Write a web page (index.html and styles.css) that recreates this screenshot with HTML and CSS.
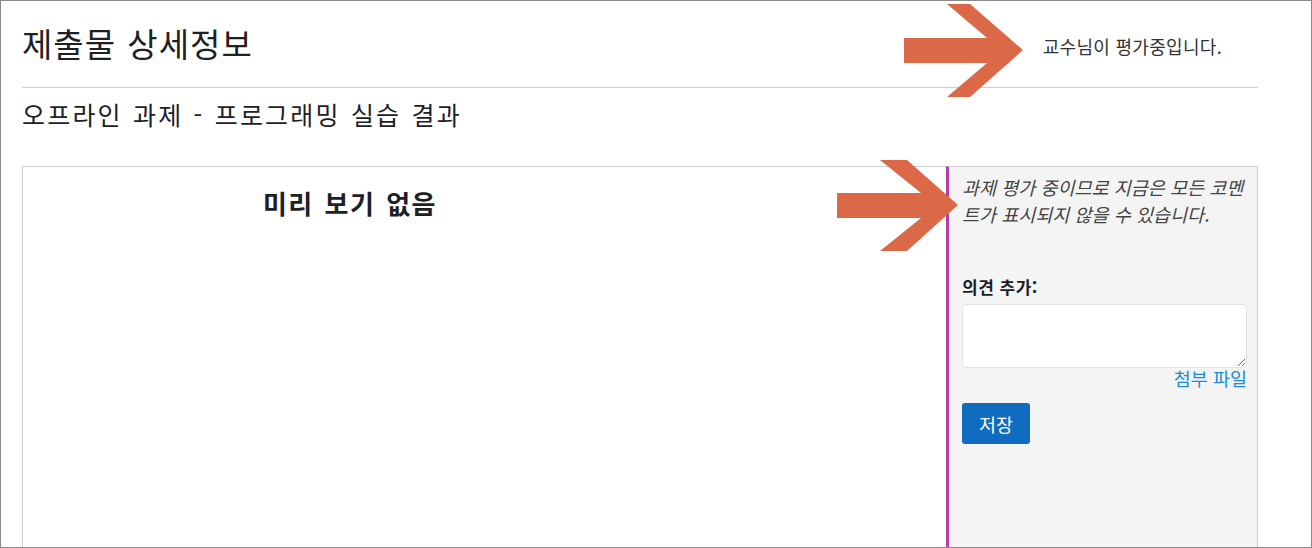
FILE: index.html
```html
<!DOCTYPE html>
<html lang="ko">
<head>
<meta charset="utf-8">
<title>제출물 상세정보</title>
<link rel="stylesheet" href="styles.css">
</head>
<body>
<div class="frame">
  <div class="header">
    <h2 class="title">제출물 상세정보</h2>
    <div class="status">교수님이 평가중입니다.</div>
  </div>
  <h3 class="subtitle">오프라인 과제 - 프로그래밍 실습 결과</h3>
  <div class="content">
    <div class="preview">
      <div class="preview-head">미리 보기 없음</div>
    </div>
    <div class="sidebar">
      <p class="notice">과제 평가 중이므로 지금은 모든 코멘트가 표시되지 않을 수 있습니다.</p>
      <label class="label" for="comment">의견 추가:</label>
      <textarea id="comment" class="comment"></textarea>
      <div class="attach"><a href="#">첨부 파일</a></div>
      <button class="save" type="button">저장</button>
    </div>
  </div>
  <svg class="arrow arrow-top" width="119" height="93" viewBox="0 0 119 93"><polygon points="0,34 83,34 43,0 66,0 119,46 66,93 43,93 83,59 0,59"/></svg>
  <svg class="arrow arrow-mid" width="121" height="91" viewBox="0 0 121 91"><polygon points="0,33 84,33 43,0 70,0 121,45 70,91 43,91 84,58 0,58"/></svg>
</div>
</body>
</html>
```

FILE: styles.css
```css
* { box-sizing: border-box; }
html, body { margin: 0; padding: 0; background: #fff; }
body {
  font-family: "Noto Sans CJK KR", "Noto Sans", sans-serif;
  color: #1d2125;
}
.frame {
  position: relative;
  width: 1312px;
  height: 548px;
  border: 1px solid #8a8a8a;
  overflow: hidden;
  padding: 0 53px 0 21px;
}
.header {
  display: flex;
  align-items: center;
  justify-content: space-between;
  height: 87px;
  border-bottom: 1px solid #cfcfcf;
}
.title {
  margin: 0;
  font-size: 33px;
  font-weight: 400;
  line-height: 1;
  margin-top: -2px;
  letter-spacing: 1px;
  word-spacing: 1px;
}
.status {
  font-size: 18px;
  letter-spacing: 0.3px;
  margin-right: 36px;
  margin-top: 3px;
  color: #333;
}
.subtitle {
  margin: 0;
  font-size: 25px;
  font-weight: 400;
  line-height: 52px;
  height: 78px;
  letter-spacing: 2.2px;
  word-spacing: 1px;
}
.content {
  display: grid;
  grid-template-columns: 1fr 312px;
  height: 400px;
}
.preview {
  border: 1px solid #cfcfcf;
  border-right: 0;
  padding-top: 16px;
}
.preview-head {
  width: 654px;
  text-align: center;
  font-size: 26px;
  font-weight: 700;
  line-height: 40px;
  letter-spacing: 1.5px;
  word-spacing: 2px;
}
.sidebar {
  background: #f4f4f5;
  border: 1px solid #cfcfcf;
  border-left: 3px solid #b23ea8;
  padding: 7px 10px 0 13px;
  display: flex;
  flex-direction: column;
  align-items: flex-start;
}
.notice {
  margin: 0 0 47px;
  font-size: 18.5px;
  font-style: italic;
  line-height: 27px;
  color: #444;
}
.label {
  font-size: 17px;
  font-weight: 700;
  line-height: 24px;
  margin-bottom: 5px;
  letter-spacing: 0.5px;
}
.comment {
  width: 285px;
  height: 64px;
  border: 1px solid #dee2e6;
  border-radius: 4px;
  background: #fff;
  font: inherit;
}
.attach {
  width: 285px;
  text-align: right;
  font-size: 18.5px;
  line-height: 20px;
}
.attach a { color: #1a8cd8; text-decoration: none; }
.save {
  margin-top: 15px;
  width: 68px;
  height: 41px;
  background: #0f6cbf;
  color: #fff;
  border: 0;
  border-radius: 3px;
  font-family: inherit;
  font-size: 18.5px;
  padding: 0;
}
.arrow { position: absolute; fill: #db6947; }
.arrow-top { left: 903px; top: 3px; }
.arrow-mid { left: 836px; top: 159px; }
```
